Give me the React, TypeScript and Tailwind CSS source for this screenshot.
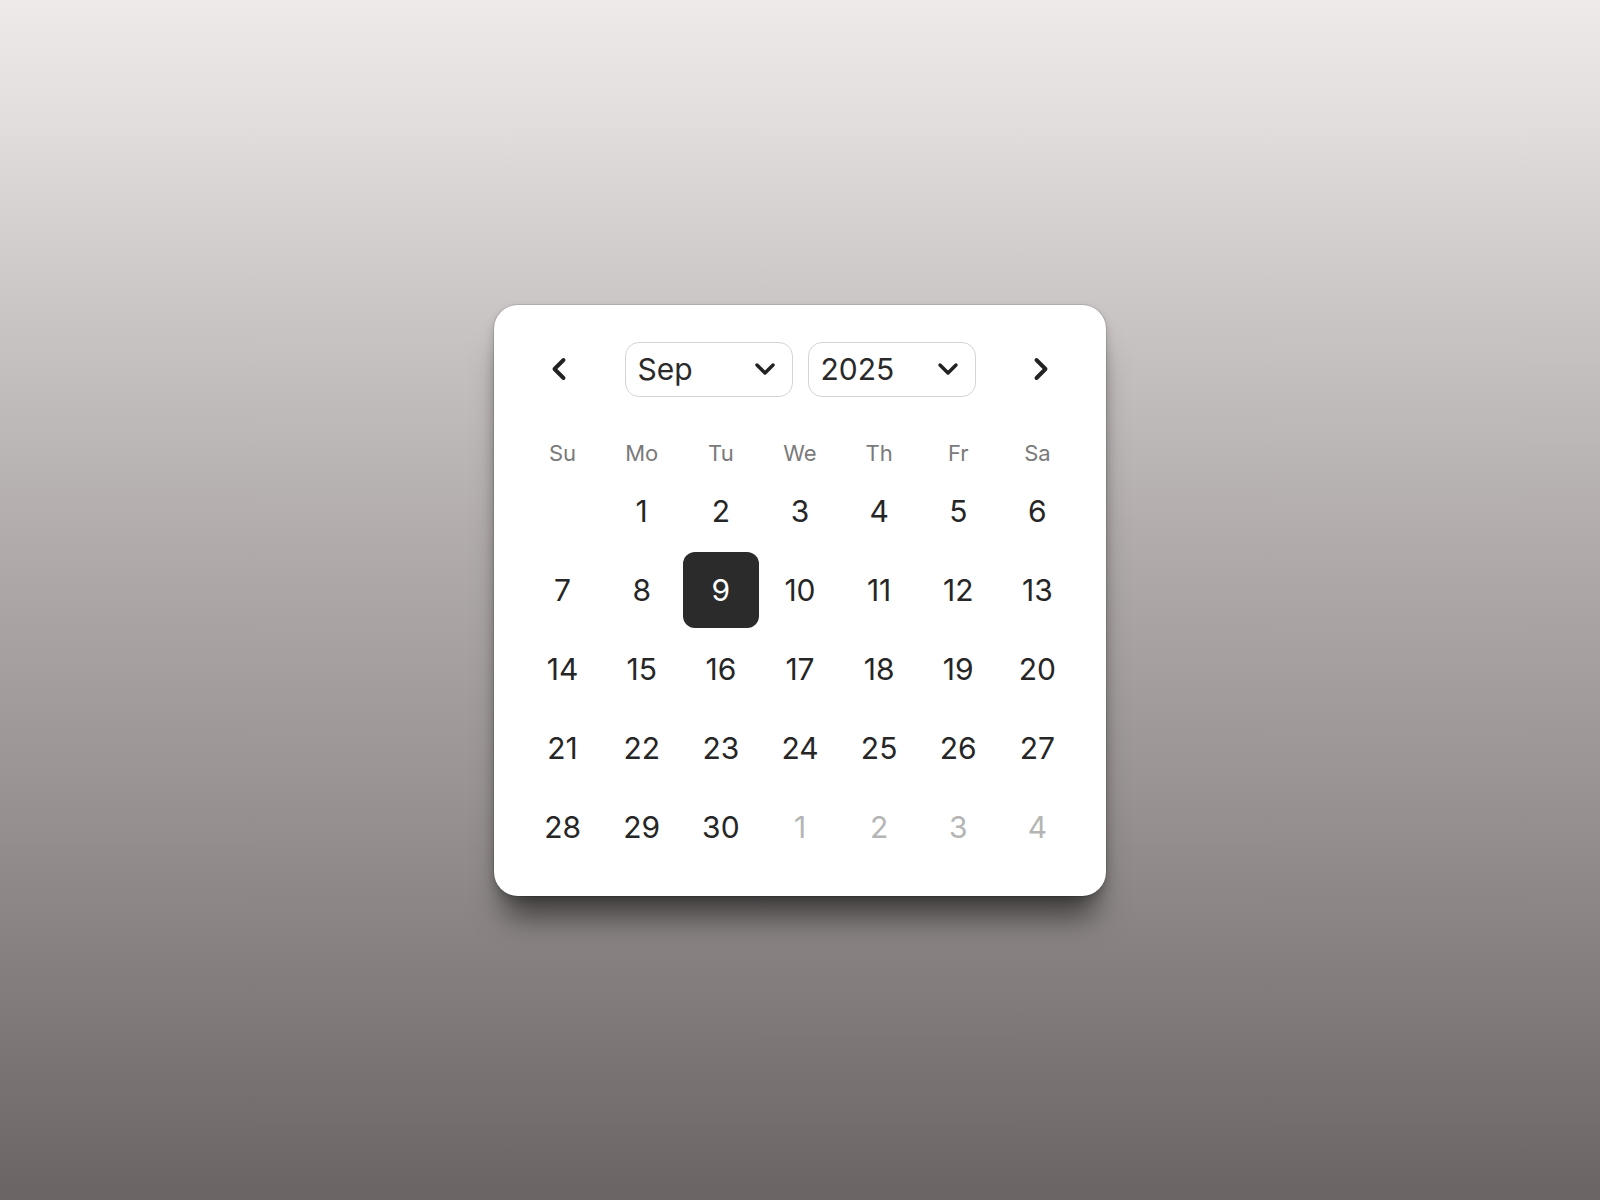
import { ChevronDown, ChevronLeft, ChevronRight } from 'lucide-react';

const weekdays = ['Su', 'Mo', 'Tu', 'We', 'Th', 'Fr', 'Sa'];

interface DayCell {
  day: number | null;
  muted?: boolean;
}

function buildDays(): DayCell[] {
  const cells: DayCell[] = [{ day: null }];
  for (let d = 1; d <= 30; d++) cells.push({ day: d });
  for (let d = 1; d <= 4; d++) cells.push({ day: d, muted: true });
  return cells;
}

function Select({ label }: { label: string }) {
  return (
    <button className="flex h-[55px] w-[168px] items-center justify-between rounded-[14px] border-[1.5px] border-[#d4d4d4] bg-white pl-[12px] pr-[11px] text-[30px] leading-none text-[#2a2a2a]">
      <span>{label}</span>
      <ChevronDown size={32} strokeWidth={2.6} className="text-[#222]" />
    </button>
  );
}

export default function App() {
  const days = buildDays();
  const selected = 9;

  return (
    <div
      className="flex min-h-screen items-center justify-center bg-[linear-gradient(180deg,#eeeaea_0%,#e2dedd_10%,#cbc7c6_25%,#b1acab_45%,#9a9494_65%,#837d7d_82%,#6a6464_100%)]"
      style={{ fontFamily: 'Inter, "Noto Sans", sans-serif' }}
    >
      <div className="w-[612px] rounded-[24px] bg-white px-[29px] pb-[29px] pt-[37px] shadow-[0_30px_30px_-10px_rgba(0,0,0,0.55),0_4px_10px_rgba(0,0,0,0.18)] ring-1 ring-black/10">
        {/* header */}
        <div className="flex h-[55px] items-center justify-between px-4">
          <button className="flex h-10 w-10 items-center justify-center text-[#222]">
            <ChevronLeft size={36} strokeWidth={2.6} />
          </button>
          <div className="flex gap-[15px]">
            <Select label="Sep" />
            <Select label="2025" />
          </div>
          <button className="flex h-10 w-10 items-center justify-center text-[#222]">
            <ChevronRight size={36} strokeWidth={2.6} />
          </button>
        </div>

        {/* weekday labels */}
        <div className="mt-[38px] grid h-[37px] grid-cols-7 items-center text-center text-[22px] text-[#7a7a7a]">
          {weekdays.map((w) => (
            <div key={w}>{w}</div>
          ))}
        </div>

        {/* days */}
        <div className="grid grid-cols-7">
          {days.map((c, i) => (
            <div key={i} className="flex h-[79px] items-center justify-center">
              {c.day !== null && (
                <div
                  className={`flex h-[76px] w-[76px] items-center justify-center rounded-[12px] text-[30px] leading-none ${
                    !c.muted && c.day === selected
                      ? 'bg-[#2b2b2b] text-white'
                      : c.muted
                      ? 'text-[#b5b5b5]'
                      : 'text-[#262626]'
                  }`}
                >
                  {c.day}
                </div>
              )}
            </div>
          ))}
        </div>
      </div>
    </div>
  );
}
